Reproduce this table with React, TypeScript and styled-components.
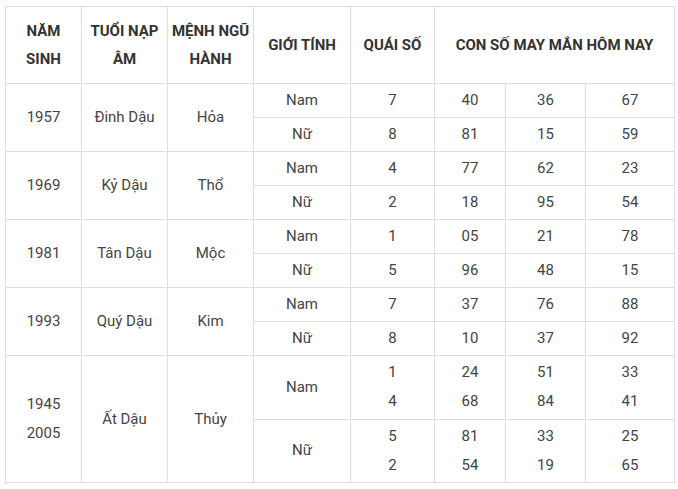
import React from "react";
import styled, { createGlobalStyle } from "styled-components";

const Global = createGlobalStyle`
  html, body { margin: 0; padding: 0; background: #fff; }
  body { font-family: Roboto, "Noto Sans", Arial, sans-serif; }
`;

const Wrap = styled.div`
  padding: 6px 0 0 5px;
`;

const Table = styled.table`
  border-collapse: collapse;
  table-layout: fixed;
  width: 669px;
`;

const Row = styled.tr<{ $h: number }>`
  height: ${(p) => p.$h}px;
`;

const HeadCell = styled.th`
  border: 1px solid #dedede;
  padding: 0;
  font-size: 15px;
  font-weight: 700;
  color: #333;
  line-height: 28px;
  text-align: center;
  vertical-align: middle;
  white-space: nowrap;
`;

const Cell = styled.td`
  border: 1px solid #dedede;
  padding: 0;
  font-size: 15px;
  font-weight: 400;
  color: #444;
  line-height: 29px;
  text-align: center;
  vertical-align: middle;
`;

type Sub = { g: string; q: string[]; n: string[][] };
type Group = { year: string[]; tuoi: string; menh: string; h: number; subs: Sub[] };

const data: Group[] = [
  { year: ["1957"], tuoi: "Đinh Dậu", menh: "Hỏa", h: 34, subs: [
    { g: "Nam", q: ["7"], n: [["40"], ["36"], ["67"]] },
    { g: "Nữ", q: ["8"], n: [["81"], ["15"], ["59"]] },
  ] },
  { year: ["1969"], tuoi: "Kỷ Dậu", menh: "Thổ", h: 34, subs: [
    { g: "Nam", q: ["4"], n: [["77"], ["62"], ["23"]] },
    { g: "Nữ", q: ["2"], n: [["18"], ["95"], ["54"]] },
  ] },
  { year: ["1981"], tuoi: "Tân Dậu", menh: "Mộc", h: 34, subs: [
    { g: "Nam", q: ["1"], n: [["05"], ["21"], ["78"]] },
    { g: "Nữ", q: ["5"], n: [["96"], ["48"], ["15"]] },
  ] },
  { year: ["1993"], tuoi: "Quý Dậu", menh: "Kim", h: 34, subs: [
    { g: "Nam", q: ["7"], n: [["37"], ["76"], ["88"]] },
    { g: "Nữ", q: ["8"], n: [["10"], ["37"], ["92"]] },
  ] },
  { year: ["1945", "2005"], tuoi: "Ất Dậu", menh: "Thủy", h: 63.5, subs: [
    { g: "Nam", q: ["1", "4"], n: [["24", "68"], ["51", "84"], ["33", "41"]] },
    { g: "Nữ", q: ["5", "2"], n: [["81", "54"], ["33", "19"], ["25", "65"]] },
  ] },
];

const Lines = ({ items }: { items: string[] }) => (
  <>
    {items.map((t, i) => (
      <React.Fragment key={i}>
        {i > 0 && <br />}
        {t}
      </React.Fragment>
    ))}
  </>
);

const widths = [76, 86, 86, 97, 84, 71, 80, 89];

export default function App() {
  return (
    <>
      <Global />
      <Wrap>
        <Table>
          <colgroup>
            {widths.map((w, i) => (
              <col key={i} style={{ width: w }} />
            ))}
          </colgroup>
          <thead>
            <Row $h={77}>
              <HeadCell>NĂM<br />SINH</HeadCell>
              <HeadCell>TUỔI NẠP<br />ÂM</HeadCell>
              <HeadCell>MỆNH NGŨ<br />HÀNH</HeadCell>
              <HeadCell>GIỚI TÍNH</HeadCell>
              <HeadCell>QUÁI SỐ</HeadCell>
              <HeadCell colSpan={3}>CON SỐ MAY MẮN HÔM NAY</HeadCell>
            </Row>
          </thead>
          <tbody>
            {data.map((grp, gi) =>
              grp.subs.map((s, si) => (
                <Row $h={grp.h} key={`${gi}-${si}`}>
                  {si === 0 && (
                    <>
                      <Cell rowSpan={2}><Lines items={grp.year} /></Cell>
                      <Cell rowSpan={2}>{grp.tuoi}</Cell>
                      <Cell rowSpan={2}>{grp.menh}</Cell>
                    </>
                  )}
                  <Cell>{s.g}</Cell>
                  <Cell><Lines items={s.q} /></Cell>
                  {s.n.map((n, ni) => (
                    <Cell key={ni}><Lines items={n} /></Cell>
                  ))}
                </Row>
              ))
            )}
          </tbody>
        </Table>
      </Wrap>
    </>
  );
}
